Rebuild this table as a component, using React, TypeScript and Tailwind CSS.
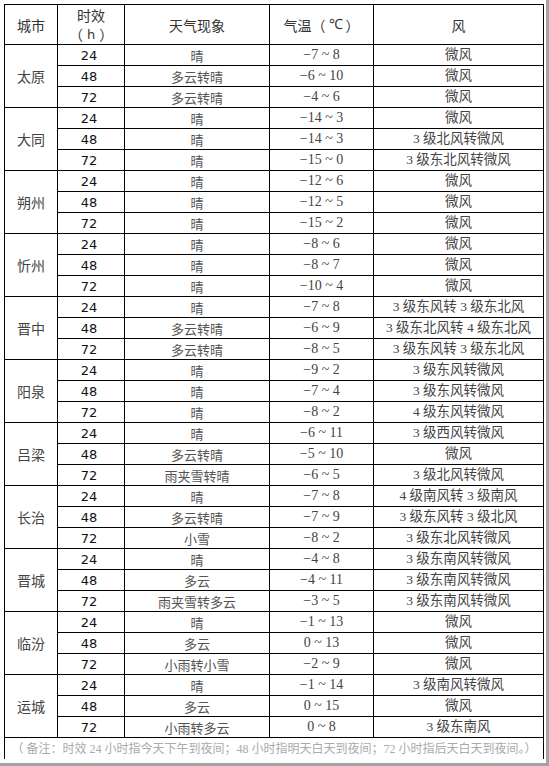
import React from "react";

type Row = { h: string; w: string; t: string; f: string };
type City = { name: string; rows: Row[] };

const cities: City[] = [
  { name: "太原", rows: [
    { h: "24", w: "晴", t: "−7 ~ 8", f: "微风" },
    { h: "48", w: "多云转晴", t: "−6 ~ 10", f: "微风" },
    { h: "72", w: "多云转晴", t: "−4 ~ 6", f: "微风" },
  ] },
  { name: "大同", rows: [
    { h: "24", w: "晴", t: "−14 ~ 3", f: "微风" },
    { h: "48", w: "晴", t: "−14 ~ 3", f: "3 级北风转微风" },
    { h: "72", w: "晴", t: "−15 ~ 0", f: "3 级东北风转微风" },
  ] },
  { name: "朔州", rows: [
    { h: "24", w: "晴", t: "−12 ~ 6", f: "微风" },
    { h: "48", w: "晴", t: "−12 ~ 5", f: "微风" },
    { h: "72", w: "晴", t: "−15 ~ 2", f: "微风" },
  ] },
  { name: "忻州", rows: [
    { h: "24", w: "晴", t: "−8 ~ 6", f: "微风" },
    { h: "48", w: "晴", t: "−8 ~ 7", f: "微风" },
    { h: "72", w: "晴", t: "−10 ~ 4", f: "微风" },
  ] },
  { name: "晋中", rows: [
    { h: "24", w: "晴", t: "−7 ~ 8", f: "3 级东风转 3 级东北风" },
    { h: "48", w: "多云转晴", t: "−6 ~ 9", f: "3 级东北风转 4 级东北风" },
    { h: "72", w: "多云转晴", t: "−8 ~ 5", f: "3 级东风转 3 级东北风" },
  ] },
  { name: "阳泉", rows: [
    { h: "24", w: "晴", t: "−9 ~ 2", f: "3 级东风转微风" },
    { h: "48", w: "晴", t: "−7 ~ 4", f: "3 级东风转微风" },
    { h: "72", w: "晴", t: "−8 ~ 2", f: "4 级东风转微风" },
  ] },
  { name: "吕梁", rows: [
    { h: "24", w: "晴", t: "−6 ~ 11", f: "3 级西风转微风" },
    { h: "48", w: "多云转晴", t: "−5 ~ 10", f: "微风" },
    { h: "72", w: "雨夹雪转晴", t: "−6 ~ 5", f: "3 级北风转微风" },
  ] },
  { name: "长治", rows: [
    { h: "24", w: "晴", t: "−7 ~ 8", f: "4 级南风转 3 级南风" },
    { h: "48", w: "多云转晴", t: "−7 ~ 9", f: "3 级东风转 3 级北风" },
    { h: "72", w: "小雪", t: "−8 ~ 2", f: "3 级东北风转微风" },
  ] },
  { name: "晋城", rows: [
    { h: "24", w: "晴", t: "−4 ~ 8", f: "3 级东南风转微风" },
    { h: "48", w: "多云", t: "−4 ~ 11", f: "3 级东南风转微风" },
    { h: "72", w: "雨夹雪转多云", t: "−3 ~ 5", f: "3 级东南风转微风" },
  ] },
  { name: "临汾", rows: [
    { h: "24", w: "晴", t: "−1 ~ 13", f: "微风" },
    { h: "48", w: "多云", t: "0 ~ 13", f: "微风" },
    { h: "72", w: "小雨转小雪", t: "−2 ~ 9", f: "微风" },
  ] },
  { name: "运城", rows: [
    { h: "24", w: "晴", t: "−1 ~ 14", f: "3 级南风转微风" },
    { h: "48", w: "多云", t: "0 ~ 15", f: "微风" },
    { h: "72", w: "小雨转多云", t: "0 ~ 8", f: "3 级东南风" },
  ] },
];

const cjk = "font-['Noto_Sans_CJK_SC',sans-serif]";
const serif = "font-['Liberation_Serif','Noto_Sans_CJK_SC',serif]";
const cell = "bg-white flex items-center justify-center";

export default function App() {
  return (
    <div className="w-[549px] h-[766px] bg-[#a3a3a3]">
      <div className="w-[546px] h-[763px] bg-white pt-[4px] pl-[4px]">
        <div className="grid grid-cols-[52px_66px_144px_103px_169px] auto-rows-[20px] grid-rows-[39px] gap-px bg-black p-px w-[540px] leading-none">
          {/* header */}
          <div className={`${cell} ${cjk} text-[14px] text-[#333]`}>城市</div>
          <div className={`${cell} flex-col gap-[5px] ${cjk} text-[14px] text-[#333]`}>
            <span>时效</span>
            <span className="flex items-center gap-[4px]">
              <span>（</span>
              <span className="font-['DejaVu_Sans',sans-serif] text-[13px]">h</span>
              <span>）</span>
            </span>
          </div>
          <div className={`${cell} ${cjk} text-[14px] text-[#333]`}>天气现象</div>
          <div className={`${cell} gap-[3px] ${cjk} text-[14px] text-[#333]`}>
            <span>气温（</span>
            <span className="font-['Liberation_Serif',serif]">℃</span>
            <span>）</span>
          </div>
          <div className={`${cell} ${cjk} text-[14px] text-[#333]`}>风</div>

          {cities.map((c) => (
            <React.Fragment key={c.name}>
              <div className={`${cell} row-span-3 ${cjk} text-[14px] text-[#444]`}>{c.name}</div>
              {c.rows.map((r) => (
                <React.Fragment key={c.name + r.h}>
                  <div className={`${cell} font-['DejaVu_Sans',sans-serif] text-[13px] text-[#111] pr-[4px]`}>{r.h}</div>
                  <div className={`${cell} ${cjk} text-[13px] text-[#555]`}>{r.w}</div>
                  <div className={`${cell} ${serif} text-[14px] text-[#444]`}>{r.t}</div>
                  <div className={`${cell} ${serif} text-[13.5px] text-[#444]`}>{r.f}</div>
                </React.Fragment>
              ))}
            </React.Fragment>
          ))}

          {/* note */}
          <div className={`${cell} col-span-5 h-[21px] ${serif} text-[12px] text-[#aaa] whitespace-nowrap`}>
            （ 备注：时效 24 小时指今天下午到夜间；48 小时指明天白天到夜间；72 小时指后天白天到夜间。）
          </div>
        </div>
      </div>
    </div>
  );
}
